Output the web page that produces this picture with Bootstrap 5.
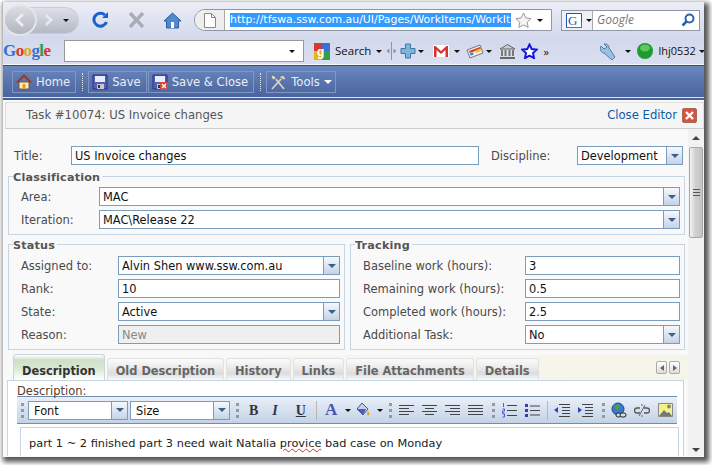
<!DOCTYPE html>
<html lang="en">
<head>
<meta charset="UTF-8" />
<title>Task #10074</title>
<link href="https://cdn.jsdelivr.net/npm/bootstrap@5.3.2/dist/css/bootstrap.min.css" rel="stylesheet" />
<style>
  html, body { width: 712px; height: 465px; overflow: hidden; background: #fff; }
  body { font-family: "DejaVu Sans", sans-serif; font-size: 11.5px; color: #444; }
  .win { width: 702px; height: 455px; margin: 2px 0 0 2px; overflow: hidden; box-shadow: 3px 3px 5px 2px #555; background: #f9f9f9; border-left: 1px solid #bbb; }

  /* left gaps for toolbar items */
  .gl2 { margin-left: 2px; } .gl3 { margin-left: 3px; } .gl4 { margin-left: 4px; } .gl5 { margin-left: 5px; }
  .gl6 { margin-left: 6px; } .gl7 { margin-left: 7px; } .gl8 { margin-left: 8px; } .gl9 { margin-left: 9px; }
  .gl10 { margin-left: 10px; } .gl13 { margin-left: 13px; } .gl14 { margin-left: 14px; } .gl18 { margin-left: 18px; }
  .gl19 { margin-left: 19px; } .gl50 { margin-left: 50px; }

  /* browser chrome */
  .nav-row { height: 36px; background: linear-gradient(#eceef6, #d3d9ec); font-family: "Open Sans", sans-serif; }
  .book-row { height: 26px; background: linear-gradient(#d3d9ec, #d9dff0); font-family: "Open Sans", sans-serif; font-size: 11.5px; color: #111; }
  .book-row > *, .nav-row > * { flex: none; }
  .capsule { width: 76px; height: 27px; border-radius: 14px; background: linear-gradient(#dde0e8, #b4b8c4); border: 1px solid #c8ccd8; }
  .round-back { width: 34px; height: 32px; border-radius: 50%; background: linear-gradient(#dcdee4, #b0b4be); border: 2px solid #e4e6ec; margin-left: -1px; flex: none; }
  .urlbar { width: 358px; height: 22px; margin-left: 12px; background: #fff; border: 1px solid #8f96a6; border-radius: 11px 0 0 11px; }
  .url-page { width: 30px; flex: none; border-right: 1px solid #aaa; height: 100%; background: #eee; border-radius: 11px 0 0 11px; }
  .url-sel { margin-left: 5px; width: 281px; flex: none; height: 14px; background: #3399ff; color: #fff; line-height: 14px; white-space: nowrap; font-family: "DejaVu Sans", sans-serif; font-size: 10.9px; }
  .srchbar { width: 139px; height: 21px; margin-left: 9px; background: #fff; border: 1px solid #8f96a6; }
  .srch-eng { width: 31px; height: 100%; border-right: 1px solid #aaa; background: #eef0f6; }
  .srch-txt { font-style: italic; color: #777; font-size: 12px; margin-left: 4px; }
  .goog { width: 50px; font-family: "Liberation Serif", serif; font-size: 17px; font-weight: bold; letter-spacing: -.6px; }
  .goog-b { color: #3a6fd8; } .goog-r { color: #d8382c; } .goog-y { color: #e0a81c; } .goog-g { color: #2f9e44; }
  .goog-box { width: 240px; height: 22px; margin-left: 11px; background: #fff; border: 1px solid #999; }
  .tri { display: inline-block; flex: none; width: 0; height: 0; border-left: 3px solid transparent; border-right: 3px solid transparent; border-top: 3px solid #111; }
  .tri-white { border-top: 4px solid #fff; border-left-width: 4px; border-right-width: 4px; }
  .chev-more { font-size: 11px; line-height: 11px; width: 6px; }
  .user-name { font-size: 11px; }

  /* blue app bar */
  .appbar { height: 35px; margin-top: 1px; padding: 5px 0 0 9px; background: linear-gradient(#6b87bf 0%, #4a649d 90%, #dfe4ef 91%, #dfe4ef 94%, #47609a 95%); border-top: 1px solid #2f4a85; gap: 1px; color: #e9edf5; }
  .appbtn { height: 22px; padding: 0 5px 0 3px; gap: 4px; border: 1px solid #8097c4; line-height: 20px; font-size: 11.6px; }
  .appbtn-tools { padding-right: 3px; }
  .appsep { width: 1px; height: 18px; margin: 2px 4px 2px 5px; border-left: 1px dotted #e6eaf3; }

  /* task header */
  .taskhead { height: 27px; margin: 2px 0 0 2px; padding: 0 6px 0 20px; background: #f5f5f5; border: 1px solid #ddd; border-bottom-color: #ccc; color: #555; font-size: 11.65px; }
  .closelink { color: #0d5aa7; margin-right: 5px; }

  /* form body */
  .formarea { width: 685px; height: 327px; padding: 17px 0 0 5px; overflow: hidden; background: #f9f9f9; }
  .title-row { height: 19px; }
  .lbl { flex: none; color: #4a4a4a; line-height: 17px; margin-top: 2px; }
  .lbl-title { width: 57px; margin-left: 6px; }
  .lbl-disc { width: 86px; margin-left: 12px; }
  .fld { height: 19px; background: #fff; border: 1px solid #7b9dbb; color: #111; line-height: 17px; padding: 1px 0 0 3px; font-size: 11.4px; white-space: nowrap; overflow: hidden; }
  .fld-title { width: 408px; }
  .fld.off { background: #efefef; color: #888; }
  .combo { height: 19px; background: #fff; border: 1px solid #7b9dbb; color: #111; line-height: 15px; padding: 2px 0 0 3px; font-size: 11.4px; white-space: nowrap; }
  .combo-disc { width: 106px; }
  .combo-ed { width: 100px; padding-left: 5px; flex: none; }
  .combo-btn { width: 16px; height: 17px; margin: -2px 0 0 auto; align-self: flex-start; flex: none; background: linear-gradient(#f6f8fc, #c3d3e6); border-left: 1px solid #7b9dbb; }
  .dn { display: block; width: 0; height: 0; border-left: 4px solid transparent; border-right: 4px solid transparent; border-top: 4px solid #3c5f8a; }
  fieldset.grp { border: 1px solid #c5d5e4; padding: 4px 4px 0 12px; }
  fieldset.grp legend { float: none; width: auto; margin: 0 0 0 -8px; padding: 2px 2px 0 0; font-size: 11.2px; font-weight: bold; color: #555; line-height: 11px; letter-spacing: .2px; }
  .grp-class { width: 677px; height: 65px; margin-top: 5px; }
  .grp-row { width: 677px; margin-top: 3px; gap: 5px; }
  fieldset.grp-status { width: 337px; height: 112px; padding-top: 5px; }
  fieldset.grp-track { width: 335px; height: 112px; padding-top: 5px; }
  .form-line { height: 19px; margin-bottom: 4px; }
  .w-lb1 { width: 78px; } .w-lb2 { width: 97px; } .w-lb3 { width: 162px; }

  /* tabs */
  .tabstrip { height: 25px; margin: 5px 0 0 5px; background: linear-gradient(90deg, #f9f9f9, #f4f4e8); }
  .tabx { height: 22px; padding: 4px 8px 0; margin-right: 2px; font-weight: bold; color: #666; font-size: 11.4px; border: 1px solid #e2e2e2; border-bottom: 0; border-radius: 3px 3px 0 0; background: linear-gradient(#fafafa, #f4f4f4 20%, #dcdcdc 70%, #fafafa); white-space: nowrap; }
  .tabx.on { height: 26px; padding-top: 8px; color: #333; border-color: #c8d6e2; background: linear-gradient(#fff, #cfe0c8 20%, #d6e6d0 50%, #fff); }
  .tab-nav { margin-right: 8px; gap: 2px; }
  .tabarrow { width: 11px; height: 13px; border: 1px solid #aaa; border-radius: 2px; background: linear-gradient(#fff, #ddd); }
  .tri-l { width: 0; height: 0; border-top: 3px solid transparent; border-bottom: 3px solid transparent; border-right: 4px solid #666; }
  .tri-r { width: 0; height: 0; border-top: 3px solid transparent; border-bottom: 3px solid transparent; border-left: 4px solid #666; }
  .tabpanel { width: 677px; height: 100px; margin-left: -1px; padding: 4px 0 0 9px; background: #fff; border-left: 1px solid #c5d5e4; border-top: 1px solid #c5d5e4; border-right: 1px solid #c5d5e4; overflow: hidden; position: relative; }
  .desc-lbl { color: #5a4030; line-height: 13px; }
  .edbar { width: 660px; height: 28px; margin-top: -2px; padding-left: 1px; background: linear-gradient(#e9eff8, #c3d3e6); border-top: 1px solid #6d8fb5; border-bottom: 1px solid #6d8fb5; }
  .edbar > * { flex: none; }
  .grip { width: 3px; height: 15px; border-left: 3px dotted #999; }
  .grip2 { width: 1px; height: 19px; background: #b8b8a8; }
  .edbox { width: 659px; height: 40px; margin: 3px 0 0 3px; padding: 7px 0 0 8px; background: #fff; border: 1px solid #c5d5e4; color: #222; font-size: 11.35px; }
  .spell { text-decoration: underline wavy #c33 1px; }
  .ed-b { font-family: "Liberation Serif", serif; font-size: 14px; font-weight: bold; color: #334; }
  .ed-a { font-family: "Liberation Serif", serif; font-size: 17px; font-weight: bold; color: #4a55b0; line-height: 16px; }

  /* scrollbar */
  .sbar { width: 16px; height: 327px; background: #f2f2f2; }
  .sb-up { height: 18px; }
  .sb-thumb { height: 91px; margin: 0 1px; background: linear-gradient(90deg, #f4f4f4, #d0d0d0 45%, #c4c4c4); border: 1px solid #a8a8a8; border-radius: 2px; }
  .up { display: block; width: 0; height: 0; border-left: 4px solid transparent; border-right: 4px solid transparent; border-bottom: 4px solid #444; }
  .dn-dark { border-top-color: #444; }
  .svgdefs { height: 0; }
</style>
</head>
<body>
<svg width="0" height="0" class="d-block svgdefs">
  <defs>
    <symbol id="al" viewBox="0 0 15 12"><path d="M0 1.500h15M0 4.500h10M0 7.500h15M0 10.500h10" stroke="#444" fill="none"/></symbol>
    <symbol id="ac" viewBox="0 0 15 12"><path d="M0 1.500h15M3 4.500h9M0 7.500h15M3 10.500h9" stroke="#444" fill="none"/></symbol>
    <symbol id="ar" viewBox="0 0 15 12"><path d="M0 1.500h15M5 4.500h10M0 7.500h15M5 10.500h10" stroke="#444" fill="none"/></symbol>
    <symbol id="aj" viewBox="0 0 15 12"><path d="M0 1.500h15M0 4.500h15M0 7.500h15M0 10.500h15" stroke="#444" fill="none"/></symbol>
    <symbol id="floppy" viewBox="0 0 16 16"><path d="M1 1h14v14H1z" fill="#5560b8" stroke="#2a3080"/><path d="M3 2h10v6H3z" fill="#e8ecf8"/><path d="M5 10h7v5H5z" fill="#c8c8d0"/><path d="M6 11h2v3H6z" fill="#333"/></symbol>
  </defs>
</svg>
<div class="win">
  <!-- browser nav row -->
  <div class="nav-row d-flex align-items-center">
    <div class="capsule d-flex align-items-center">
      <div class="round-back d-flex align-items-center justify-content-center">
        <svg width="14" height="16" viewBox="0 0 14 16"><path d="M10 2 4 8l6 6" stroke="#eee" stroke-width="2.800" fill="none"/></svg>
      </div>
      <svg class="gl6" width="12" height="14" viewBox="0 0 12 14"><path d="M3 2l5 5-5 5" stroke="#e8e8ea" stroke-width="2.800" fill="none"/></svg>
      <span class="tri gl8"></span>
    </div>
    <svg class="gl13" width="17" height="18" viewBox="0 0 17 18"><path d="M13 4A6.500 6.500 0 1 0 14.500 11" stroke="#1c5fd0" stroke-width="3" fill="none"/><path d="M10 7h6V1z" fill="#1c5fd0"/></svg>
    <svg class="gl19" width="17" height="16" viewBox="0 0 17 16"><path d="M2 1l13 14M15 1 2 15" stroke="#a8acb6" stroke-width="3.400"/></svg>
    <svg class="gl18" width="19" height="17" viewBox="0 0 19 17"><path d="M9.500 1 1 9h2.500v7h12V9H18z" fill="#4f8ad0" stroke="#2a5ea0"/><path d="M8 10h3v6H8z" fill="#fff"/></svg>
    <div class="urlbar d-flex align-items-center">
      <div class="url-page d-flex align-items-center justify-content-center">
        <svg width="12" height="15" viewBox="0 0 12 15"><path d="M.5.500h7l4 4v10H.5z" fill="#fff" stroke="#888"/><path d="M7.500.500v4h4" fill="none" stroke="#888"/></svg>
      </div>
      <div class="url-sel">http://tfswa.ssw.com.au/UI/Pages/WorkItems/WorkIt</div>
      <svg class="gl4" width="17" height="16" viewBox="0 0 17 16"><path d="M8.500 1l2.300 4.900 5.200.7-3.800 3.600 1 5.300-4.700-2.600-4.700 2.600 1-5.300L1 6.600l5.200-.7z" fill="#f4f4f4" stroke="#999"/></svg>
      <span class="tri ms-auto me-2"></span>
    </div>
    <div class="srchbar d-flex align-items-center">
      <div class="srch-eng d-flex align-items-center ps-1">
        <svg width="16" height="15" viewBox="0 0 16 15"><path d="M.5.500h15v14H.5z" fill="#fff" stroke="#1f55b0"/><path d="M.5 14.500h15v-5" fill="none" stroke="#2a9a3a"/><text x="2" y="12" font-family="Liberation Serif" font-size="13" fill="#1f55b0">G</text></svg>
        <span class="tri gl4"></span>
      </div>
      <span class="srch-txt">Google</span>
      <svg class="ms-auto me-1" width="14" height="14" viewBox="0 0 14 14"><circle cx="8.500" cy="5.500" r="4" fill="none" stroke="#2a62a8" stroke-width="2"/><path d="M6 8l-4.500 4.500" stroke="#2a62a8" stroke-width="2.600"/></svg>
    </div>
  </div>
  <!-- google toolbar -->
  <div class="book-row d-flex align-items-center">
    <div class="goog"><span class="goog-b">G</span><span class="goog-r">o</span><span class="goog-y">o</span><span class="goog-b">g</span><span class="goog-g">l</span><span class="goog-r">e</span></div>
    <div class="goog-box d-flex align-items-center justify-content-end pe-2"><span class="tri"></span></div>
    <svg class="gl10" width="16" height="17" viewBox="0 0 16 17"><rect width="8" height="8" fill="#d8382c"/><rect x="8" width="8" height="8" fill="#3a6fd8" /><rect y="8" width="8" height="9" fill="#e8b41c"/><rect x="8" y="8" width="8" height="9" fill="#2f9e44"/><text x="3" y="13" font-family="Liberation Sans" font-size="12" font-weight="bold" fill="#fff">g</text></svg>
    <span class="gl5">Search</span>
    <span class="tri gl5"></span>
    <svg class="gl4" width="11" height="20" viewBox="0 0 11 20"><path d="M5.500 1v18" stroke="#8a93a8"/><path d="M3.500 7.500l-3 2.500 3 2.500zM7.500 7.500l3 2.500-3 2.500z" fill="#8a93a8"/></svg>
    <svg class="gl3" width="16" height="16" viewBox="0 0 16 16"><path d="M5.500 1h5v4.500H15v5h-4.500V15h-5v-4.500H1v-5h4.500z" fill="#7eb4d8" stroke="#3a78a8"/></svg>
    <span class="tri gl2"></span>
    <svg class="gl9" width="16" height="12" viewBox="0 0 16 12"><path d="M0 0h16v12H0z" fill="#fff"/><path d="M1 12V1h1.500L8 6l5.500-5H15v11h-2.500V5L8 9 3.500 5v7z" fill="#d8332c"/></svg>
    <span class="tri gl5"></span>
    <svg class="gl6" width="18" height="15" viewBox="0 0 18 15"><path d="M1 6l13-5 3 8-13 5z" fill="#eee" stroke="#777"/><path d="M3 7l11-4 .8 2-11 4z" fill="#d8382c"/><path d="M9 6.500l5-2 1 2.500-5 2z" fill="#e8c41c"/><path d="M4 9.500l3-1 .6 2-3 1z" fill="#3a6fd8"/></svg>
    <span class="tri gl2"></span>
    <svg class="gl7" width="17" height="15" viewBox="0 0 17 15"><path d="M8.500.500 1 5h15z" fill="#ccc" stroke="#666"/><path d="M3 6v6M6.500 6v6M10.500 6v6M14 6v6" stroke="#777" stroke-width="2"/><path d="M1 14h15" stroke="#666" stroke-width="2"/></svg>
    <svg class="gl5" width="17" height="16" viewBox="0 0 17 16"><path d="M8.500 1.500l2.200 4.600 5 .6-3.700 3.400 1 5-4.500-2.500L4 15.100l1-5-3.700-3.400 5-.6z" fill="#fff" stroke="#1414e0" stroke-width="2"/></svg>
    <span class="gl5 chev-more">»</span>
    <svg class="gl50" width="17" height="17" viewBox="0 0 17 17"><path d="M2 3l3 3 2-1 1-1-3-3c2-.5 5 .5 5 4l6 9-3 3-8-7C2 10 .5 6 2 3z" fill="#9cc0e0" stroke="#4a7ca8"/></svg>
    <span class="tri gl9"></span>
    <svg class="gl6" width="16" height="16" viewBox="0 0 16 16"><circle cx="8" cy="8" r="8" fill="#1f9a30"/><ellipse cx="8" cy="5" rx="5" ry="3.500" fill="#5cc860"/></svg>
    <span class="gl5 user-name">lhj0532</span>
    <span class="tri gl3"></span>
  </div>
  <!-- app toolbar -->
  <div class="appbar d-flex">
    <div class="appbtn d-flex align-items-center">
      <svg width="16" height="16" viewBox="0 0 16 16"><path d="M3 8h10v7H3z" fill="#f6ecc8" stroke="#7a5a30"/><path d="M1 8.500 8 1.500l7 7" fill="none" stroke="#9a3a20" stroke-width="2"/><path d="M6.500 10h3v5h-3z" fill="#e0a020"/></svg>
      <span>Home</span>
    </div>
    <div class="appsep"></div>
    <div class="appbtn d-flex align-items-center">
      <svg width="16" height="16"><use href="#floppy"/></svg>
      <span>Save</span>
    </div>
    <div class="appbtn d-flex align-items-center">
      <svg width="16" height="16" viewBox="0 0 16 16"><use href="#floppy"/><path d="M8 8h8v8H8z" fill="#d04a3a"/><path d="M10 10l4 4M14 10l-4 4" stroke="#fff" stroke-width="1.300"/></svg>
      <span>Save &amp; Close</span>
    </div>
    <div class="appsep"></div>
    <div class="appbtn appbtn-tools d-flex align-items-center">
      <svg width="17" height="16" viewBox="0 0 17 16"><path d="M2 15 12 4M14 15 5 4" stroke="#d8d0b8" stroke-width="1.800"/><path d="M9 3l4-2 3 4-2 1zM2 1l3 1 1 3-3 1-2-3z" fill="#d4d4d8" stroke="#555" stroke-width=".6"/></svg>
      <span>Tools</span>
      <span class="tri tri-white"></span>
    </div>
  </div>
  <!-- task header -->
  <div class="taskhead d-flex align-items-center justify-content-between">
    <span>Task #10074: US Invoice changes</span>
    <span class="d-flex align-items-center">
      <span class="closelink">Close Editor</span>
      <svg width="15" height="15" viewBox="0 0 15 15"><rect x=".5" y=".5" width="14" height="14" rx="1.500" fill="#d8533e" stroke="#a8695a"/><path d="M4 4l7 7M11 4l-7 7" stroke="#fff" stroke-width="2.400"/></svg>
    </span>
  </div>
  <div class="d-flex">
    <div class="formarea">
      <div class="title-row d-flex align-items-center">
        <span class="lbl lbl-title">Title:</span>
        <div class="fld fld-title">US Invoice changes</div>
        <span class="lbl lbl-disc">Discipline:</span>
        <div class="combo combo-disc d-flex align-items-center">Development<span class="combo-btn d-flex align-items-center justify-content-center"><i class="dn"></i></span></div>
      </div>
      <fieldset class="grp grp-class">
        <legend>Classification</legend>
        <div class="form-line d-flex align-items-center">
          <span class="lbl w-lb1">Area:</span>
          <div class="combo d-flex align-items-center flex-grow-1">MAC<span class="combo-btn d-flex align-items-center justify-content-center"><i class="dn"></i></span></div>
        </div>
        <div class="form-line d-flex align-items-center">
          <span class="lbl w-lb1">Iteration:</span>
          <div class="combo d-flex align-items-center flex-grow-1">MAC\Release 22<span class="combo-btn d-flex align-items-center justify-content-center"><i class="dn"></i></span></div>
        </div>
      </fieldset>
      <div class="grp-row d-flex">
        <fieldset class="grp grp-status">
          <legend>Status</legend>
          <div class="form-line d-flex align-items-center">
            <span class="lbl w-lb2">Assigned to:</span>
            <div class="combo d-flex align-items-center flex-grow-1">Alvin Shen www.ssw.com.au<span class="combo-btn d-flex align-items-center justify-content-center"><i class="dn"></i></span></div>
          </div>
          <div class="form-line d-flex align-items-center">
            <span class="lbl w-lb2">Rank:</span>
            <div class="fld flex-grow-1">10</div>
          </div>
          <div class="form-line d-flex align-items-center">
            <span class="lbl w-lb2">State:</span>
            <div class="combo d-flex align-items-center flex-grow-1">Active<span class="combo-btn d-flex align-items-center justify-content-center"><i class="dn"></i></span></div>
          </div>
          <div class="form-line d-flex align-items-center">
            <span class="lbl w-lb2">Reason:</span>
            <div class="fld off flex-grow-1">New</div>
          </div>
        </fieldset>
        <fieldset class="grp grp-track">
          <legend>Tracking</legend>
          <div class="form-line d-flex align-items-center">
            <span class="lbl w-lb3">Baseline work (hours):</span>
            <div class="fld flex-grow-1">3</div>
          </div>
          <div class="form-line d-flex align-items-center">
            <span class="lbl w-lb3">Remaining work (hours):</span>
            <div class="fld flex-grow-1">0.5</div>
          </div>
          <div class="form-line d-flex align-items-center">
            <span class="lbl w-lb3">Completed work (hours):</span>
            <div class="fld flex-grow-1">2.5</div>
          </div>
          <div class="form-line d-flex align-items-center">
            <span class="lbl w-lb3">Additional Task:</span>
            <div class="combo d-flex align-items-center flex-grow-1">No<span class="combo-btn d-flex align-items-center justify-content-center"><i class="dn"></i></span></div>
          </div>
        </fieldset>
      </div>
      <!-- tabs -->
      <div class="tabstrip d-flex align-items-end">
        <div class="tabx on">Description</div>
        <div class="tabx">Old Description</div>
        <div class="tabx">History</div>
        <div class="tabx">Links</div>
        <div class="tabx">File Attachments</div>
        <div class="tabx">Details</div>
        <div class="tab-nav d-flex ms-auto align-self-center">
          <div class="tabarrow d-flex align-items-center justify-content-center"><i class="tri-l"></i></div>
          <div class="tabarrow d-flex align-items-center justify-content-center"><i class="tri-r"></i></div>
        </div>
      </div>
      <div class="tabpanel">
        <div class="desc-lbl">Description:</div>
        <div class="edbar d-flex align-items-center">
          <span class="grip gl3"></span>
          <div class="combo combo-ed d-flex align-items-center gl4">Font<span class="combo-btn d-flex align-items-center justify-content-center"><i class="dn"></i></span></div>
          <div class="combo combo-ed d-flex align-items-center gl2">Size<span class="combo-btn d-flex align-items-center justify-content-center"><i class="dn"></i></span></div>
          <span class="grip gl6"></span>
          <b class="ed-b gl10">B</b>
          <i class="ed-b gl14">I</i>
          <u class="ed-b gl18">U</u>
          <span class="grip2 gl10"></span>
          <span class="ed-a gl8">A</span>
          <span class="tri gl8"></span>
          <svg class="gl4" width="16" height="16" viewBox="0 0 16 16"><path d="M7 1l6 6-5 6-6-6z" fill="#c8d0e8" stroke="#4a55a0"/><path d="M2 7h9l-3 6z" fill="#4a60b8"/><path d="M13 9c1 2 2 3 1 4s-2 0-2-1z" fill="#e8a010"/></svg>
          <span class="tri gl6"></span>
          <span class="grip gl6"></span>
          <svg class="gl7" width="15" height="12"><use href="#al"/></svg>
          <svg class="gl8" width="15" height="12"><use href="#ac"/></svg>
          <svg class="gl8" width="15" height="12"><use href="#ar"/></svg>
          <svg class="gl8" width="15" height="12"><use href="#aj"/></svg>
          <span class="grip gl9"></span>
          <svg class="gl7" width="15" height="15" viewBox="0 0 15 15"><path d="M5 2.500h10M5 7.500h10M5 12.500h10" stroke="#444"/><path d="M1.500 0v4M.5 6h2v2h-2v2h2M.5 11h2v3h-2" fill="none" stroke="#33c" stroke-width=".8"/></svg>
          <svg class="gl8" width="15" height="13" viewBox="0 0 15 13"><path d="M5 2h10M5 6.500h10M5 11h10" stroke="#444"/><path d="M0 0h3v3H0zM0 5h3v3H0zM0 10h3v3H0z" fill="#3a3ab0"/></svg>
          <span class="grip2 gl7"></span>
          <svg class="gl6" width="16" height="14" viewBox="0 0 16 14"><path d="M5 1.500h11M8 4.500h8M8 7.500h8M8 10.500h8M5 13.500h11" stroke="#444"/><path d="M4 4v6L0 7z" fill="#2a4ab8"/></svg>
          <svg class="gl7" width="16" height="14" viewBox="0 0 16 14"><path d="M5 1.500h11M8 4.500h8M8 7.500h8M8 10.500h8M5 13.500h11" stroke="#444"/><path d="M1 4v6l4-3z" fill="#2a4ab8"/></svg>
          <span class="grip gl9"></span>
          <svg class="gl6" width="16" height="17" viewBox="0 0 16 17"><circle cx="7" cy="7" r="6" fill="#3a7ac8" stroke="#244a88"/><path d="M3 4l4-2 2 3-3 3z" fill="#4aa83a"/><rect x="5" y="11" width="5" height="4" rx="2" fill="#ddd" stroke="#222"/><rect x="9" y="11" width="6" height="4" rx="2" fill="#ddd" stroke="#222"/></svg>
          <svg class="gl7" width="16" height="13" viewBox="0 0 16 13"><path d="M6 4H3a2.500 2.500 0 0 0 0 5h3M10 4h3a2.500 2.500 0 0 1 0 5h-3" fill="none" stroke="#555" stroke-width="1.300"/><path d="M5 12 11 1M8 0v2M8 11v2" stroke="#666"/></svg>
          <svg class="gl8" width="15" height="14" viewBox="0 0 15 14"><path d="M.5.500h14v13H.5z" fill="#f4f08a" stroke="#888"/><circle cx="11" cy="3.500" r="2" fill="#887"/><path d="M1 13l5-6 3 3 2-1 3 4z" fill="#777"/></svg>
        </div>
        <div class="edbox">part 1 ~ 2 finished part 3 need wait Natalia <span class="spell">provice</span> bad case on Monday</div>
      </div>
    </div>
    <div class="sbar d-flex flex-column">
      <div class="sb-up d-flex align-items-center justify-content-center"><i class="up"></i></div>
      <div class="sb-thumb d-flex align-items-center justify-content-center">
        <svg width="7" height="7" viewBox="0 0 7 7"><path d="M0 .5h7M0 3.500h7M0 6.500h7" stroke="#555"/></svg>
      </div>
      <div class="mt-auto d-flex justify-content-center pb-1"><i class="dn dn-dark"></i></div>
    </div>
  </div>
</div>
<script src="https://cdn.jsdelivr.net/npm/bootstrap@5.3.2/dist/js/bootstrap.bundle.min.js"></script>
</body>
</html>
